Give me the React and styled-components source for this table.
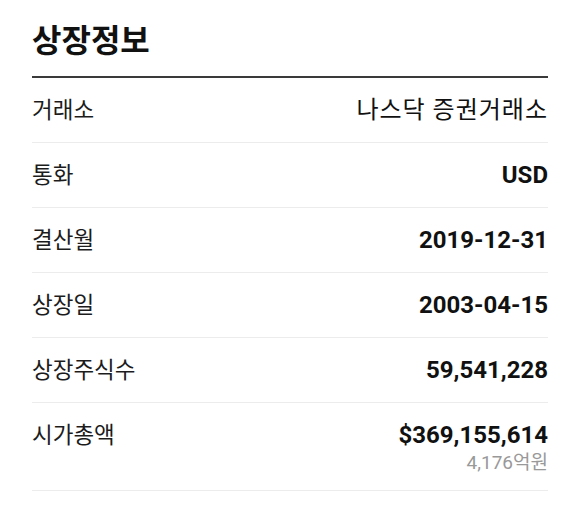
import React from 'react';
import styled, { createGlobalStyle } from 'styled-components';

const GlobalStyle = createGlobalStyle`
  html, body {
    margin: 0;
    padding: 0;
    background: #fff;
  }
  body {
    font-family: Roboto, "Noto Sans CJK KR", sans-serif;
    color: #111;
  }
`;

const Panel = styled.section`
  padding: 21px 32px 0;
`;

const Title = styled.h2`
  margin: 0;
  padding-bottom: 15px;
  font-size: 32px;
  line-height: 40px;
  font-weight: 700;
  color: #111;
  border-bottom: 2px solid #3a3a3a;
`;

const Row = styled.div`
  display: flex;
  justify-content: space-between;
  align-items: flex-start;
  padding: 20px 0 ${(p) => (p.$tall ? '15px' : '20px')};
  border-bottom: 1px solid #ececec;
`;

const Label = styled.span`
  font-size: 22.5px;
  line-height: 24px;
  color: #1c1c1c;
`;

const ValueBox = styled.div`
  display: flex;
  flex-direction: column;
  align-items: flex-end;
`;

const Value = styled.span`
  font-size: 24px;
  font-weight: ${(p) => (p.$plain ? 400 : 700)};
  letter-spacing: ${(p) => (p.$plain ? '1px' : '0')};
  line-height: 24px;
  color: #111;
`;

const SubValue = styled.span`
  margin-top: 4px;
  font-size: 19px;
  line-height: 24px;
  color: #999;
  font-weight: 400;
`;

const rows = [
  { label: '거래소', value: '나스닥 증권거래소', plain: true },
  { label: '통화', value: 'USD' },
  { label: '결산월', value: '2019-12-31' },
  { label: '상장일', value: '2003-04-15' },
  { label: '상장주식수', value: '59,541,228' },
];

const App = () => {
  return (
    <>
      <GlobalStyle />
      <Panel>
        <Title>상장정보</Title>
        {rows.map((r) => (
          <Row key={r.label}>
            <Label>{r.label}</Label>
            <Value $plain={r.plain}>{r.value}</Value>
          </Row>
        ))}
        <Row $tall>
          <Label>시가총액</Label>
          <ValueBox>
            <Value>$369,155,614</Value>
            <SubValue>4,176억원</SubValue>
          </ValueBox>
        </Row>
      </Panel>
    </>
  );
};

export default App;
